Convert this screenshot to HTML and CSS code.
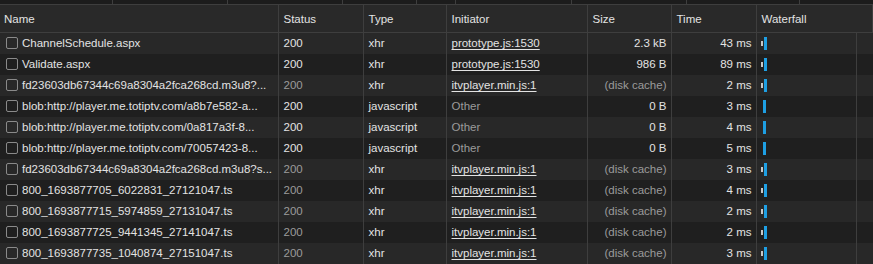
FILE: index.html
```html
<!DOCTYPE html>
<html lang="en">
  <head>
    <meta charset="UTF-8" />
    <meta name="viewport" content="width=device-width, initial-scale=1.0" />
    <title>Network</title>
    <link rel="stylesheet" href="styles.css">
  </head>
  <body>
    <div class="topstrip">
      <div class="seg" style="width:113px"></div>
      <div class="seg" style="width:115px"></div>
      <div class="seg" style="width:115px"></div>
      <div class="seg" style="width:74px"></div>
      <div class="seg" style="width:39px"></div>
      <div class="seg" style="width:116px"></div>
      <div class="seg" style="width:115px"></div>
      <div class="seg" style="width:113px"></div>
    </div>
    <table class="net">
      <colgroup>
        <col style="width:278px">
        <col style="width:85px">
        <col style="width:83px">
        <col style="width:141px">
        <col style="width:84px">
        <col style="width:85px">
        <col>
      </colgroup>
      <thead>
        <tr>
          <th>Name</th>
          <th>Status</th>
          <th>Type</th>
          <th>Initiator</th>
          <th>Size</th>
          <th>Time</th>
          <th>Waterfall</th>
        </tr>
      </thead>
      <tbody>
        <tr>
          <td class="name"><span class="box"></span>ChannelSchedule.aspx</td>
          <td>200</td>
          <td>xhr</td>
          <td><span class="link">prototype.js:1530</span></td>
          <td class="num">2.3 kB</td>
          <td class="num">43 ms</td>
          <td class="wf"><div class="wfgrid"><span class="wait"></span><span class="bar"></span></div></td>
        </tr>
        <tr>
          <td class="name"><span class="box"></span>Validate.aspx</td>
          <td>200</td>
          <td>xhr</td>
          <td><span class="link">prototype.js:1530</span></td>
          <td class="num">986 B</td>
          <td class="num">89 ms</td>
          <td class="wf"><div class="wfgrid"><span class="wait"></span><span class="bar"></span></div></td>
        </tr>
        <tr>
          <td class="name"><span class="box"></span>fd23603db67344c69a8304a2fca268cd.m3u8?...</td>
          <td class="dim">200</td>
          <td>xhr</td>
          <td><span class="link">itvplayer.min.js:1</span></td>
          <td class="num dim">(disk cache)</td>
          <td class="num">2 ms</td>
          <td class="wf"><div class="wfgrid"><span class="wait"></span><span class="bar"></span></div></td>
        </tr>
        <tr>
          <td class="name"><span class="box"></span>blob:http://player.me.totiptv.com/a8b7e582-a...</td>
          <td>200</td>
          <td>javascript</td>
          <td class="dim">Other</td>
          <td class="num">0 B</td>
          <td class="num">3 ms</td>
          <td class="wf"><div class="wfgrid"><span class="bar solo"></span></div></td>
        </tr>
        <tr>
          <td class="name"><span class="box"></span>blob:http://player.me.totiptv.com/0a817a3f-8...</td>
          <td>200</td>
          <td>javascript</td>
          <td class="dim">Other</td>
          <td class="num">0 B</td>
          <td class="num">4 ms</td>
          <td class="wf"><div class="wfgrid"><span class="bar solo"></span></div></td>
        </tr>
        <tr>
          <td class="name"><span class="box"></span>blob:http://player.me.totiptv.com/70057423-8...</td>
          <td>200</td>
          <td>javascript</td>
          <td class="dim">Other</td>
          <td class="num">0 B</td>
          <td class="num">5 ms</td>
          <td class="wf"><div class="wfgrid"><span class="bar solo"></span></div></td>
        </tr>
        <tr>
          <td class="name"><span class="box"></span>fd23603db67344c69a8304a2fca268cd.m3u8?s...</td>
          <td class="dim">200</td>
          <td>xhr</td>
          <td><span class="link">itvplayer.min.js:1</span></td>
          <td class="num dim">(disk cache)</td>
          <td class="num">3 ms</td>
          <td class="wf"><div class="wfgrid"><span class="wait"></span><span class="bar"></span></div></td>
        </tr>
        <tr>
          <td class="name"><span class="box"></span>800_1693877705_6022831_27121047.ts</td>
          <td class="dim">200</td>
          <td>xhr</td>
          <td><span class="link">itvplayer.min.js:1</span></td>
          <td class="num dim">(disk cache)</td>
          <td class="num">4 ms</td>
          <td class="wf"><div class="wfgrid"><span class="wait"></span><span class="bar"></span></div></td>
        </tr>
        <tr>
          <td class="name"><span class="box"></span>800_1693877715_5974859_27131047.ts</td>
          <td class="dim">200</td>
          <td>xhr</td>
          <td><span class="link">itvplayer.min.js:1</span></td>
          <td class="num dim">(disk cache)</td>
          <td class="num">2 ms</td>
          <td class="wf"><div class="wfgrid"><span class="wait"></span><span class="bar"></span></div></td>
        </tr>
        <tr>
          <td class="name"><span class="box"></span>800_1693877725_9441345_27141047.ts</td>
          <td class="dim">200</td>
          <td>xhr</td>
          <td><span class="link">itvplayer.min.js:1</span></td>
          <td class="num dim">(disk cache)</td>
          <td class="num">2 ms</td>
          <td class="wf"><div class="wfgrid"><span class="wait"></span><span class="bar"></span></div></td>
        </tr>
        <tr>
          <td class="name"><span class="box"></span>800_1693877735_1040874_27151047.ts</td>
          <td class="dim">200</td>
          <td>xhr</td>
          <td><span class="link">itvplayer.min.js:1</span></td>
          <td class="num dim">(disk cache)</td>
          <td class="num">3 ms</td>
          <td class="wf"><div class="wfgrid"><span class="wait"></span><span class="bar"></span></div></td>
        </tr>
      </tbody>
    </table>
  </body>
</html>
```

FILE: styles.css
```css
* {
  margin: 0;
  padding: 0;
  box-sizing: border-box;
}
body {
  background: #1f1f1f;
  color: #e3e3e3;
  font-family: "Liberation Sans", Arial, sans-serif;
  font-size: 11.5px;
  overflow: hidden;
}
.topstrip {
  display: flex;
  height: 5px;
  background: #1c1c1c;
  border-bottom: 1px solid #3e3e3e;
}
.topstrip .seg {
  height: 100%;
  border-right: 1px solid #3e3e3e;
}
.net {
  width: 873px;
  table-layout: fixed;
  border-collapse: collapse;
}
.net th {
  height: 27px;
  padding: 1px 5px 0;
  background: #292929;
  font-weight: normal;
  text-align: left;
  border-right: 1px solid #3e3e3e;
  border-bottom: 1px solid #3e3e3e;
  white-space: nowrap;
}
.net th:first-child {
  padding-left: 4px;
}
.net td {
  height: 21px;
  padding: 0 5px;
  border-right: 1px solid #3e3e3e;
  white-space: nowrap;
  overflow: hidden;
}
.net tbody tr:nth-child(odd) {
  background: #282828;
}
.net tbody tr:nth-child(even) {
  background: #1f1f1f;
}
.net td.name {
  padding-left: 6px;
}
.box {
  display: inline-block;
  width: 12px;
  height: 12px;
  border: 1px solid #8a8a8a;
  border-radius: 2px;
  vertical-align: -2px;
  margin-right: 4px;
}
.net td.num {
  text-align: right;
  padding-right: 4px;
}
.dim {
  color: #9b9b9b;
}
.link {
  text-decoration: underline;
  text-underline-offset: 2px;
}
.net td.wf {
  padding: 0;
  border-right: none;
}
.wfgrid {
  width: 100px;
  height: 21px;
  border-right: 1px solid #3e3e3e;
  display: flex;
  align-items: center;
  padding-left: 4px;
  gap: 1px;
}
.wait {
  width: 2px;
  height: 5px;
  background: #c8c8c8;
}
.bar {
  width: 3px;
  height: 13px;
  background: #1e9fe3;
}
.bar.solo {
  margin-left: 2px;
}
```
